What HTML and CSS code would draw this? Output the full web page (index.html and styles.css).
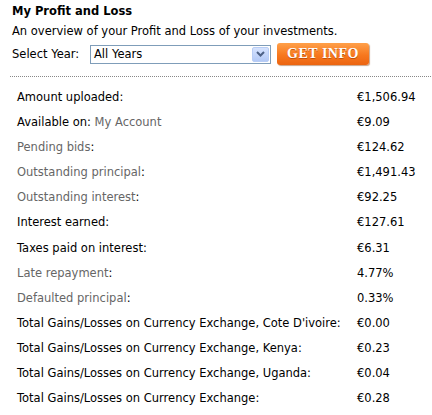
FILE: index.html
```html
<!DOCTYPE html>
<html lang="en">
<head>
	<meta charset="UTF-8">
	<title>My Profit and Loss</title>
	<link rel="stylesheet" href="styles.css">
</head>
<body>
	<div id="pnl">
		<h2 class="title">My Profit and Loss</h2>
		<p class="intro">An overview of your Profit and Loss of your investments.</p>
		<div class="filter">
			<span class="filterLabel">Select Year:</span>
			<div class="select">
				<span class="selectText">All Years</span>
				<span class="selectBtn">
					<svg width="9" height="6" viewBox="0 0 9 6"><path d="M1 1 L4.5 4.5 L8 1" fill="none" stroke="#4d6185" stroke-width="2"/></svg>
				</span>
			</div>
			<a class="getInfo" href="#">GET INFO</a>
		</div>
		<div class="sep"></div>
		<ul class="rows">
			<li><span class="lbl">Amount uploaded:</span><span class="val">€1,506.94</span></li>
			<li><span class="lbl">Available on: <a href="#">My Account</a></span><span class="val">€9.09</span></li>
			<li><span class="lbl"><a href="#">Pending bids</a>:</span><span class="val">€124.62</span></li>
			<li><span class="lbl"><a href="#">Outstanding principal</a>:</span><span class="val">€1,491.43</span></li>
			<li><span class="lbl"><a href="#">Outstanding interest</a>:</span><span class="val">€92.25</span></li>
			<li><span class="lbl">Interest earned:</span><span class="val">€127.61</span></li>
			<li><span class="lbl">Taxes paid on interest:</span><span class="val">€6.31</span></li>
			<li><span class="lbl"><a href="#">Late repayment</a>:</span><span class="val">4.77%</span></li>
			<li><span class="lbl"><a href="#">Defaulted principal</a>:</span><span class="val">0.33%</span></li>
			<li><span class="lbl">Total Gains/Losses on Currency Exchange, Cote D'ivoire:</span><span class="val">€0.00</span></li>
			<li><span class="lbl">Total Gains/Losses on Currency Exchange, Kenya:</span><span class="val">€0.23</span></li>
			<li><span class="lbl">Total Gains/Losses on Currency Exchange, Uganda:</span><span class="val">€0.04</span></li>
			<li><span class="lbl">Total Gains/Losses on Currency Exchange:</span><span class="val">€0.28</span></li>
		</ul>
	</div>
</body>
</html>
```
FILE: styles.css
```css
* {padding: 0; margin: 0; box-sizing: border-box;}
body {background: #fff; font-family: "DejaVu Sans", Verdana, sans-serif; font-size: 11.5px; color: #000;}
li {list-style: none;}
a {color: #666; text-decoration: none;}

#pnl {padding: 4px 0 0 12px; width: 432px;}
.title {font-size: 11.5px; font-weight: bold; line-height: 14px;}
.intro {margin-top: 6px; line-height: 14px;}

.filter {display: flex; align-items: center; margin-top: 4px; height: 24px;}
.filterLabel {width: 78px;}
.select {width: 181px; height: 19px; border: 1px solid #7f9db9; display: flex; align-items: center; justify-content: space-between; padding: 0 1px 0 3px;}
.selectBtn {width: 17px; height: 15px; background: linear-gradient(#d6e3fe, #b3c9f6); border: 1px solid #b8cdf5; border-radius: 2px; display: flex; align-items: center; justify-content: center;}
.getInfo {margin-left: 6px; width: 92px; height: 22px; border-radius: 3px; background: linear-gradient(#ffa04a, #f7781e 55%, #ec6410); box-shadow: 1px 1px 1px #c9a58a; color: #fff; font-family: "Liberation Serif", "DejaVu Serif", serif; font-weight: bold; font-size: 14px; letter-spacing: 0.5px; display: flex; align-items: center; justify-content: center; text-shadow: 0 1px 0 #c0500a;}

.sep {margin: 10px 1px 0 -2px; border-top: 1px dotted #888;}

.rows {padding: 13px 0 0 5px;}
.rows li {display: flex; height: 25.1px; line-height: 14px;}
.rows .lbl {width: 340px;}
.rows .val {flex: 1;}
```
